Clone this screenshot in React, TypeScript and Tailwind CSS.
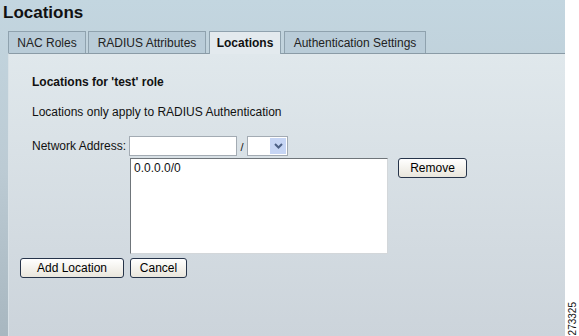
import React from 'react';

const font = { fontFamily: '"Liberation Sans", Arial, sans-serif' };

function Tab({ label, width, active }: { label: string; width: string; active?: boolean }) {
  if (active) {
    return (
      <div className={`${width} h-[23px] -mb-px relative z-10 flex items-center justify-center bg-[#e3eaee] border border-b-0 border-[#8fa2ae] text-[12px] font-bold text-[#111]`}>
        {label}
      </div>
    );
  }
  return (
    <div className={`${width} h-[22px] flex items-center justify-center bg-[#b9ccd8] border border-b-0 border-[#8fa2ae] text-[12px] text-[#222]`}>
      {label}
    </div>
  );
}

function XpButton({ label, width }: { label: string; width: string }) {
  return (
    <button
      className={`${width} h-[20px] rounded-[3px] border border-[#26344a] bg-gradient-to-b from-white to-[#e9e6dc] text-[12px] text-black leading-none`}
    >
      {label}
    </button>
  );
}

export default function App() {
  return (
    <div className="w-[579px] h-[336px] flex overflow-hidden" style={font}>
      <div className="w-[565px] h-full flex flex-col bg-gradient-to-b from-[#c3d6e0] via-[#bccbd4] to-[#a8b7c0]">
        {/* Title */}
        <div className="h-[31px] pl-[3px] pt-[2px] text-[17px] font-bold text-[#111] leading-[22px]">
          Locations
        </div>

        {/* Tabs */}
        <div className="flex items-end gap-[2px] pl-[8px] h-[22px]">
          <Tab label="NAC Roles" width="w-[78px]" />
          <Tab label="RADIUS Attributes" width="w-[118px] mr-[1px]" />
          <Tab label="Locations" width="w-[72px] mr-[1px]" active />
          <Tab label="Authentication Settings" width="w-[142px]" />
        </div>

        {/* Panel */}
        <div className="flex-1 ml-[8px] border-t border-l border-t-[#8a9ba6] border-l-[#d8e1e6] bg-gradient-to-b from-[#e0e8ec] to-[#ccd4db] pl-[11px] text-[12px] text-[#111]">
          <div className="pl-[12px]">
            <div className="mt-[21px] font-bold leading-[14px]">Locations for 'test' role</div>
            <div className="mt-[16px] leading-[14px]">Locations only apply to RADIUS Authentication</div>

            <div className="mt-[17px] flex items-center h-[20px]">
              <div className="w-[97px] leading-[14px]">Network Address:</div>
              <div className="w-[108px] h-[20px] bg-white border border-[#a3abb3]" />
              <div className="w-[10px] text-center text-[11px] pt-[3px]">/</div>
              <div className="w-[41px] h-[20px] bg-white border border-[#a3abb3] flex justify-end p-[1px]">
                <div className="w-[16px] h-full bg-[#c6d5f4] flex items-center justify-center">
                  <svg width="9" height="6" viewBox="0 0 9 6">
                    <path d="M1 1 L4.5 4.5 L8 1" stroke="#4d6185" strokeWidth="2" fill="none" />
                  </svg>
                </div>
              </div>
            </div>

            <div className="mt-[2px] flex items-start">
              <div className="ml-[98px] w-[258px] h-[96px] bg-white border border-[#6f757a] border-r-[#d3d7da] border-b-[#d3d7da] pl-[3px] pt-[2px] leading-[15px]">
                0.0.0.0/0
              </div>
              <div className="ml-[10px]">
                <XpButton label="Remove" width="w-[69px]" />
              </div>
            </div>
          </div>

          <div className="mt-[4px] flex gap-[6px]">
            <XpButton label="Add Location" width="w-[104px]" />
            <XpButton label="Cancel" width="w-[57px]" />
          </div>
        </div>
      </div>

      {/* Figure number strip */}
      <div className="flex-1 bg-white flex flex-col justify-end items-center pb-[1px]">
        <div className="[writing-mode:vertical-rl] rotate-180 text-[10px] leading-[11px] text-[#111]">
          273325
        </div>
      </div>
    </div>
  );
}
